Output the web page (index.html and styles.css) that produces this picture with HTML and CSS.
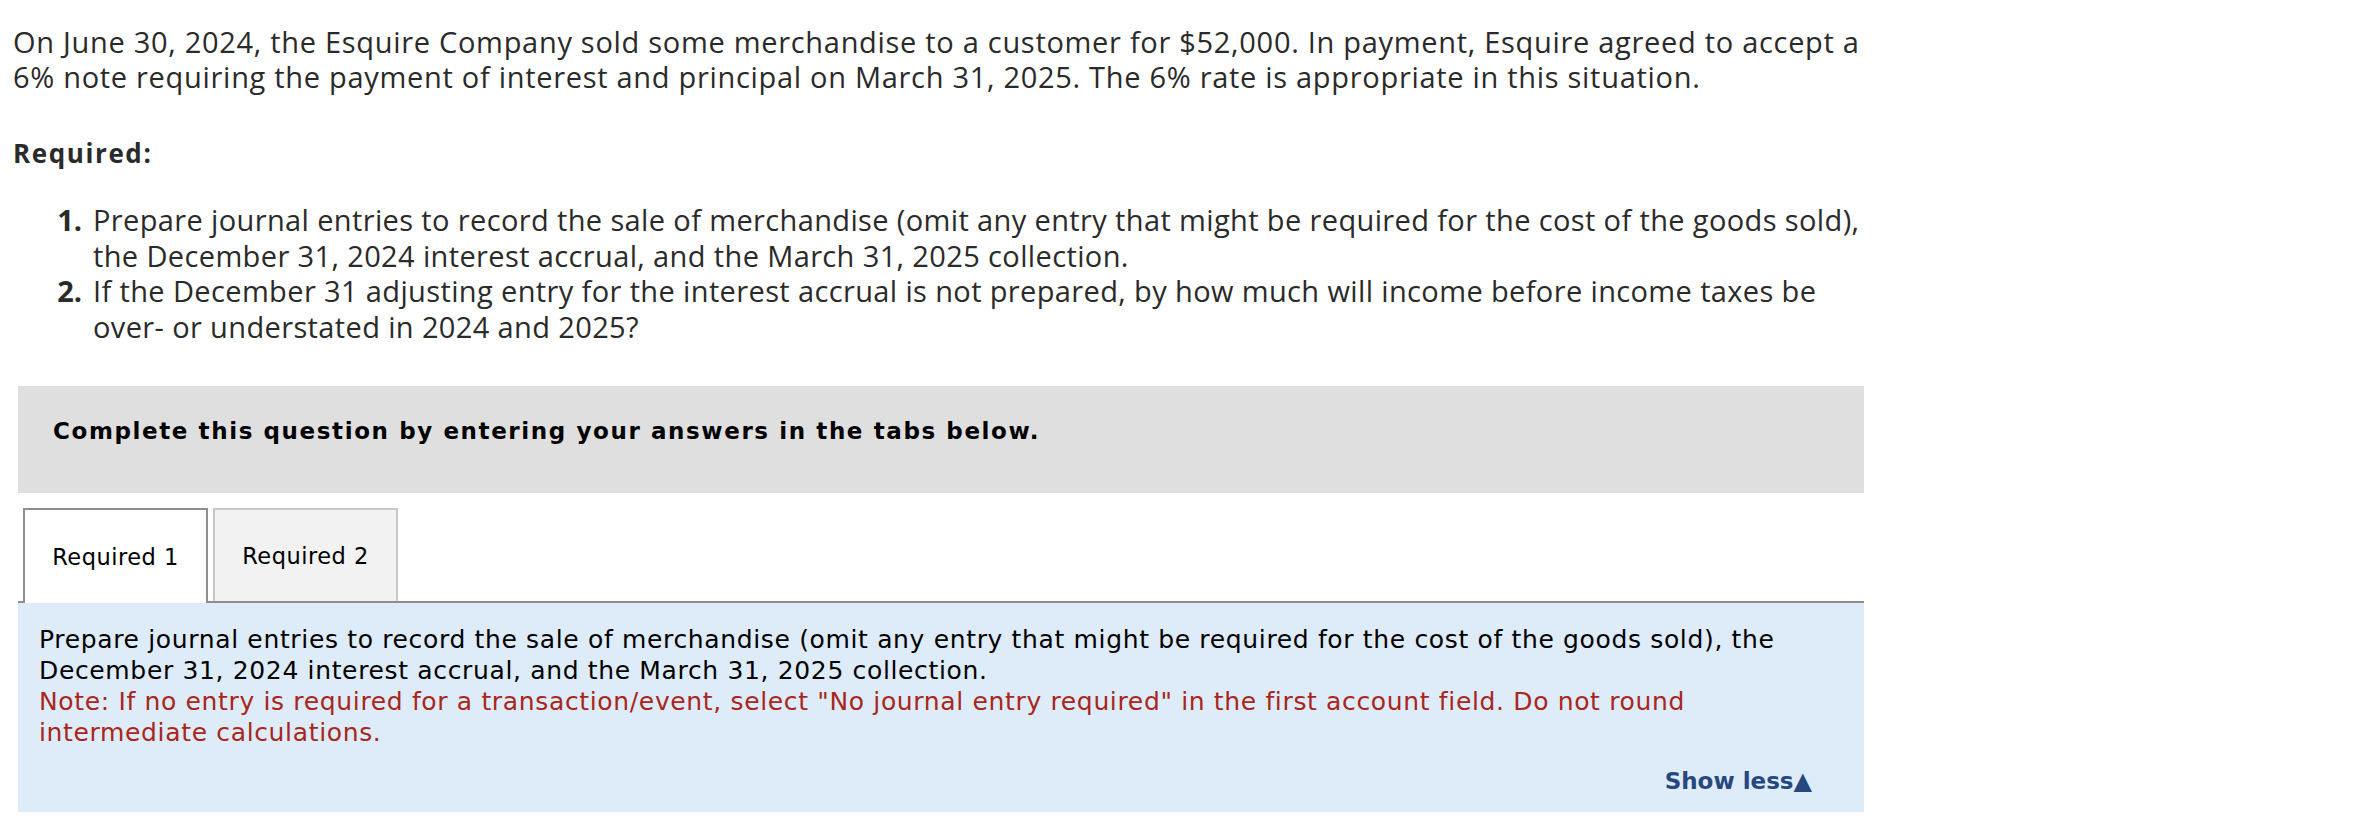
FILE: index.html
```html
<!DOCTYPE html>
<html lang="en">
<head>
<meta charset="utf-8">
<title>Esquire Company – Note Receivable</title>
<link rel="stylesheet" href="styles.css">
</head>
<body>
<main class="page">
  <p class="intro">On June 30, 2024, the Esquire Company sold some merchandise to a customer for $52,000. In payment, Esquire agreed to accept a 6% note requiring the payment of interest and principal on March 31, 2025. The 6% rate is appropriate in this situation.</p>
  <h3 class="req-title">Required:</h3>
  <ol class="req-list">
    <li><span class="num">1.</span><span class="req-text">Prepare journal entries to record the sale of merchandise (omit any entry that might be required for the cost of the goods sold), the December 31, 2024 interest accrual, and the March 31, 2025 collection.</span></li>
    <li><span class="num">2.</span><span class="req-text">If the December 31 adjusting entry for the interest accrual is not prepared, by how much will income before income taxes be over- or understated in 2024 and 2025?</span></li>
  </ol>

  <section class="quiz">
    <div class="instructions">Complete this question by entering your answers in the tabs below.</div>
    <div class="tabs" role="tablist">
      <div class="tab active" role="tab">Required 1</div>
      <div class="tab" role="tab">Required 2</div>
    </div>
    <div class="panel">
      <p class="prompt">Prepare journal entries to record the sale of merchandise (omit any entry that might be required for the cost of the goods sold), the December 31, 2024 interest accrual, and the March 31, 2025 collection.</p>
      <p class="note">Note: If no entry is required for a transaction/event, select "No journal entry required" in the first account field. Do not round intermediate calculations.</p>
      <div class="show-less">Show less<span class="tri">▲</span></div>
    </div>
  </section>
</main>
</body>
</html>
```
FILE: styles.css
```css
html, body {
  margin: 0;
  background: #ffffff;
}

body {
  color: #2a2a2a;
  font-family: "Open Sans", "Liberation Sans", sans-serif;
}

.page {
  width: 1905px;
  padding: 24px 0 0 13px;
}

.intro {
  margin: 0 33px 0 0;
  font-size: 29px;
  line-height: 35px;
  letter-spacing: 0.7px;
}

.req-title {
  margin: 44px 0 0;
  font-size: 26px;
  line-height: 30px;
  font-weight: 700;
  letter-spacing: 1.6px;
}

.req-list {
  list-style: none;
  margin: 34px 40px 0 0;
  padding: 0 0 0 38px;
  font-size: 29px;
  line-height: 35.5px;
  letter-spacing: 0.37px;
}

.req-list li {
  display: grid;
  grid-template-columns: 31px 1fr;
  column-gap: 11px;
}

.num {
  font-weight: 700;
  text-align: right;
  letter-spacing: 0;
}

.quiz {
  margin: 42px 54px 0 5px;
  font-family: "DejaVu Sans", Verdana, sans-serif;
  color: #000;
}

.instructions {
  background: #dfdfdf;
  padding: 32px 35px 49px;
  font-size: 23px;
  line-height: 26px;
  font-weight: 700;
  letter-spacing: 1.6px;
}

.tabs {
  display: flex;
  gap: 5px;
  margin-top: 15px;
  padding-left: 5px;
  border-bottom: 2px solid #8e8e8e;
}

.tab {
  box-sizing: border-box;
  width: 185px;
  height: 93px;
  display: flex;
  align-items: center;
  justify-content: center;
  border: 2px solid #c8c8c8;
  border-bottom: 0;
  background: #f2f2f2;
  font-size: 22.5px;
  letter-spacing: 0.5px;
}

.tab.active {
  height: 95px;
  margin-bottom: -2px;
  background: #ffffff;
  border-color: #8e8e8e;
}

.panel {
  background: #deebf8;
  padding: 21px 30px 16px 21px;
}

.prompt,
.note {
  margin: 0;
  font-size: 25px;
  line-height: 31px;
  letter-spacing: 0.65px;
}

.note {
  color: #a8261d;
}

.show-less {
  margin-top: 18px;
  padding-right: 22px;
  text-align: right;
  font-size: 23px;
  line-height: 30px;
  font-weight: 700;
  color: #26487f;
}

.tri {
  font-size: 24px;
}
```
